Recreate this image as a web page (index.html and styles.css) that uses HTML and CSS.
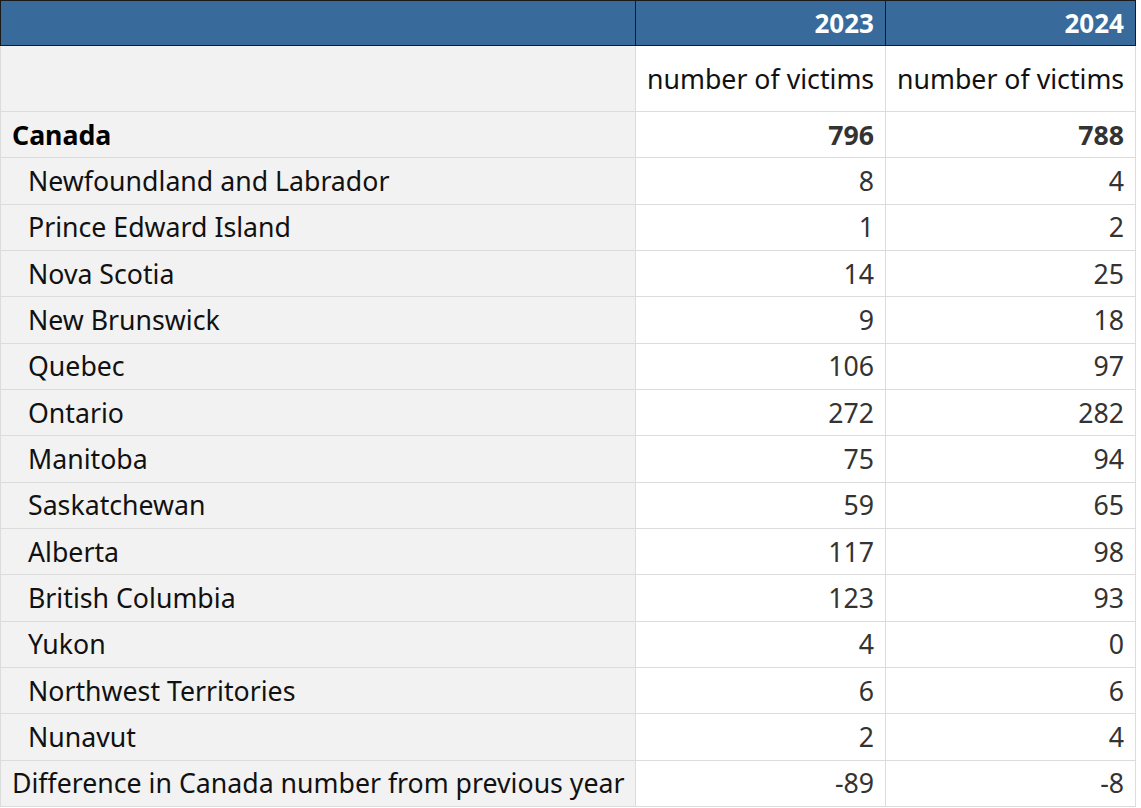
FILE: index.html
```html
<!DOCTYPE html>
<html>
<head>
<meta charset="utf-8">
<link rel="stylesheet" href="styles.css">
</head>
<body>
<table class="data">
  <thead>
    <tr class="head">
      <th class="lab"></th>
      <th class="yr">2023</th>
      <th class="yr">2024</th>
    </tr>
  </thead>
  <tbody>
    <tr class="units">
      <th class="lab"></th>
      <td>number of victims</td>
      <td>number of victims</td>
    </tr>
    <tr class="total">
      <th class="lab">Canada</th>
      <td>796</td>
      <td>788</td>
    </tr>
    <tr><th class="lab sub">Newfoundland and Labrador</th><td>8</td><td>4</td></tr>
    <tr><th class="lab sub">Prince Edward Island</th><td>1</td><td>2</td></tr>
    <tr><th class="lab sub">Nova Scotia</th><td>14</td><td>25</td></tr>
    <tr><th class="lab sub">New Brunswick</th><td>9</td><td>18</td></tr>
    <tr><th class="lab sub">Quebec</th><td>106</td><td>97</td></tr>
    <tr><th class="lab sub">Ontario</th><td>272</td><td>282</td></tr>
    <tr><th class="lab sub">Manitoba</th><td>75</td><td>94</td></tr>
    <tr><th class="lab sub">Saskatchewan</th><td>59</td><td>65</td></tr>
    <tr><th class="lab sub">Alberta</th><td>117</td><td>98</td></tr>
    <tr><th class="lab sub">British Columbia</th><td>123</td><td>93</td></tr>
    <tr><th class="lab sub">Yukon</th><td>4</td><td>0</td></tr>
    <tr><th class="lab sub">Northwest Territories</th><td>6</td><td>6</td></tr>
    <tr><th class="lab sub">Nunavut</th><td>2</td><td>4</td></tr>
    <tr><th class="lab">Difference in Canada number from previous year</th><td>-89</td><td>-8</td></tr>
  </tbody>
</table>
</body>
</html>
```

FILE: styles.css
```css
html, body {
  margin: 0;
  padding: 0;
  background: #ffffff;
}
body {
  font-family: "Noto Sans", "Open Sans", sans-serif;
  font-size: 26.7px;
  color: #111;
}
.data {
  border-collapse: collapse;
  width: 1135px;
  table-layout: fixed;
}
.data th, .data td {
  border: 1px solid #dcdcdc;
  padding: 0 11px;
  height: 45.33px;
  line-height: 32px;
  font-weight: normal;
  text-align: right;
  white-space: nowrap;
  color: #333;
}
.data th.lab {
  width: 612px;
  text-align: left;
  background: #f2f2f2;
  color: #111;
}
.data th.sub {
  padding-left: 27px;
}
.data tr.head th {
  background: #386a9c;
  border: 1px solid #1a1a1a;
  color: #ffffff;
  font-weight: bold;
  font-size: 26px;
  height: 44px;
}
.data tr.head th.yr {
  width: 227px;
}
.data tr.units td {
  height: 65px;
  color: #111;
}
.data tr.units th {
  height: 65px;
}
.data tr.total th, .data tr.total td {
  font-weight: bold;
}
.data tr.total th {
  color: #000;
}
```
